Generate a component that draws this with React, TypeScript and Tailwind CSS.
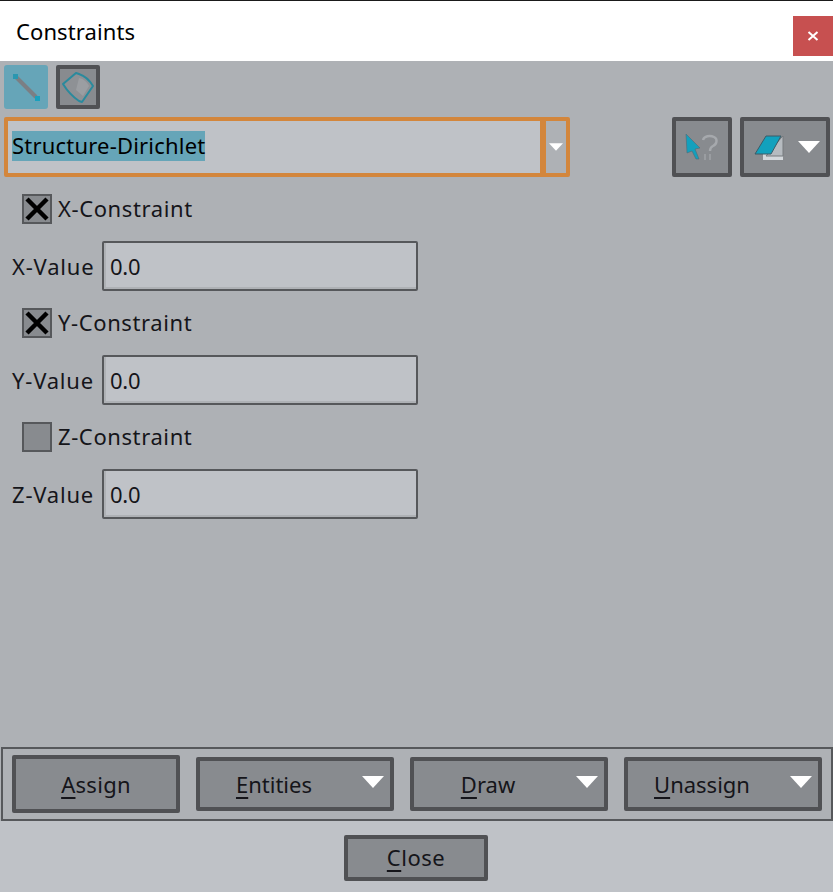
import React from 'react';

const font = "font-['Noto_Sans',sans-serif]";

const Caret = ({ small = false }: { small?: boolean }) => (
  <svg width={small ? 14 : 22} height={small ? 8 : 12} viewBox="0 0 22 12" className="shrink-0">
    <path d="M0 0H22L11 12Z" fill="#ffffff" />
  </svg>
);

const LineIcon = () => (
  <svg width="32" height="32" viewBox="0 0 32 32">
    <path d="M6 6L26 26" stroke="#7b7f84" strokeWidth="4" />
    <rect x="3" y="3" width="5" height="5" fill="#2a97b0" />
    <rect x="25" y="25" width="5" height="5" fill="#1aa0bd" />
  </svg>
);

const SurfaceIcon = () => (
  <svg width="36" height="36" viewBox="0 0 36 36">
    <path d="M3 15L16 4L19 5C25 7 30 12 33 17L22 33L19 32C13 28 8 23 3 15Z" fill="#8e9195" stroke="#2a8a9d" strokeWidth="2" strokeLinejoin="round" />
    <path d="M19 9C24 10 27 13 29 17L23 27L16 21Z" fill="#9b9ea2" />
  </svg>
);

const PickIcon = () => (
  <svg width="36" height="28" viewBox="0 0 36 28">
    <path d="M2 1L16 15L11 16L15 26L12 26L8 18L3 20Z" fill="#13a0bd" stroke="#4d6c78" strokeWidth="0.6" />
    <path d="M19 7C20 3 26 2 30 4C34 6 33 11 29 13C27 14 26 15 26 18" fill="none" stroke="#a6a9ad" strokeWidth="2.4" />
    <rect x="20" y="21" width="2" height="6" fill="#9a9da1" />
    <rect x="25" y="21" width="2" height="6" fill="#9a9da1" />
  </svg>
);

const EraserIcon = () => (
  <svg width="30" height="25" viewBox="0 0 30 25">
    <path d="M9 19H29V25H9Z" fill="#d4d8dc" />
    <path d="M29 1V21H12L27 3Z" fill="#b6bbc0" stroke="#777a7e" strokeWidth="1" />
    <path d="M12 1H27L17 19H1Z" fill="#12a1bd" stroke="#3d5b66" strokeWidth="1" />
  </svg>
);

const CheckBox = ({ checked }: { checked: boolean }) => (
  <div className="w-[30px] h-[30px] bg-[#888b8f] border-2 border-[#56585b] flex items-center justify-center">
    {checked && (
      <svg width="26" height="26" viewBox="0 0 26 26">
        <path d="M3 3L23 23M23 3L3 23" stroke="#000000" strokeWidth="4.5" />
      </svg>
    )}
  </div>
);

const Field = ({ axis, checked }: { axis: string; checked: boolean }) => (
  <div className="flex flex-col">
    <div className="flex items-center h-[30px] pl-[22px] gap-[6px]">
      <CheckBox checked={checked} />
      <span className="mb-[2px] text-[22px] tracking-[0.6px] text-[#15151a]">{axis}-Constraint</span>
    </div>
    <div className="flex items-center h-[50px] mt-[17px] pl-[12px]">
      <span className="w-[90px] text-[22px] tracking-[0.8px] text-[#15151a]">{axis}-Value</span>
      <div className="w-[316px] h-[50px] flex items-center pl-[6px] bg-[#bfc2c7] border-2 border-[#56585b] rounded-[2px] shadow-[inset_2px_-2px_0_#aeb1b5] text-[22px] tracking-[-0.3px] text-[#15151a]">
        0.0
      </div>
    </div>
  </div>
);

const MenuButton = ({ first, rest }: { first: string; rest: string }) => (
  <button className="w-[198px] h-[54px] relative flex items-center justify-center pr-[42px] bg-[#888b8f] border-4 border-[#505154] rounded-[2px] text-[22px] text-[#15151a]">
    <span><span className="underline underline-offset-[4px]">{first}</span>{rest}</span>
    <span className="absolute right-[6px] top-[15px]"><Caret /></span>
  </button>
);

export default function App() {
  return (
    <div className={`w-[833px] h-[892px] flex flex-col overflow-hidden bg-[#bfc2c7] ${font}`}>
      {/* title bar */}
      <div className="h-[61px] shrink-0 bg-white border-t-[1px] border-[#1a1a1a] flex items-start justify-between">
        <span className="mt-[14px] ml-[16px] text-[22px] leading-[32px] tracking-[0.1px] text-black">Constraints</span>
        <button className="w-[40px] h-[40px] mt-[15px] bg-[#c75050] flex items-center justify-center">
          <svg width="12" height="12" viewBox="0 0 12 12">
            <path d="M1.5 2L10.5 10M10.5 2L1.5 10" stroke="#ffffff" strokeWidth="2" />
          </svg>
        </button>
      </div>

      {/* main panel */}
      <div className="flex-1 bg-[#aeb1b5] flex flex-col">
        <div className="flex gap-[8px] pl-[4px] pt-[4px]">
          <button className="w-[44px] h-[44px] bg-[#66a5b8] rounded-[3px] flex items-center justify-center">
            <LineIcon />
          </button>
          <button className="w-[44px] h-[44px] bg-[#888b8f] border-4 border-[#505154] rounded-[2px] flex items-center justify-center">
            <SurfaceIcon />
          </button>
        </div>

        <div className="flex items-center mt-[8px] pl-[4px] pr-[3px]">
          <div className="w-[566px] h-[60px] flex border-4 border-[#d3863c] rounded-[2px]">
            <div className="flex-1 flex items-center pl-[4px] bg-[#bfc2c7]">
              <span className="mb-[2px] pb-[2px] bg-[#66a5b8] text-[22px] leading-[28px] tracking-[0.2px] text-black">Structure-Dirichlet</span>
            </div>
            <div className="w-[26px] flex items-center justify-center border-l-[6px] border-[#d3863c] bg-[#aeb1b5]">
              <Caret small />
            </div>
          </div>
          <button className="ml-auto w-[60px] h-[60px] bg-[#888b8f] border-4 border-[#505154] rounded-[2px] flex items-center justify-center">
            <PickIcon />
          </button>
          <button className="ml-[8px] w-[90px] h-[60px] bg-[#888b8f] border-4 border-[#505154] rounded-[2px] flex items-center pl-[10px] gap-[14px]">
            <EraserIcon />
            <Caret />
          </button>
        </div>

        <div className="flex flex-col gap-[17px] mt-[17px]">
          <Field axis="X" checked />
          <Field axis="Y" checked />
          <Field axis="Z" checked={false} />
        </div>

        {/* action group */}
        <div className="mt-auto ml-[1px] mr-0 h-[74px] border-2 border-[#56585b] flex items-center pl-[9px] pr-[9px] justify-between">
          <button className="w-[168px] h-[58px] bg-[#888b8f] border-4 border-[#505154] rounded-[2px] text-[22px] tracking-[0.3px] text-[#15151a]">
            <span className="underline underline-offset-[4px]">A</span>ssign
          </button>
          <MenuButton first="E" rest="ntities" />
          <MenuButton first="D" rest="raw" />
          <MenuButton first="U" rest="nassign" />
        </div>
      </div>

      {/* footer */}
      <div className="h-[71px] shrink-0 flex items-center justify-center bg-[#bfc2c7] pt-[2px] pr-[1px]">
        <button className="w-[144px] h-[46px] bg-[#888b8f] border-4 border-[#505154] rounded-[2px] text-[22px] tracking-[0.5px] text-[#15151a]">
          <span className="underline underline-offset-[4px]">C</span>lose
        </button>
      </div>
    </div>
  );
}
